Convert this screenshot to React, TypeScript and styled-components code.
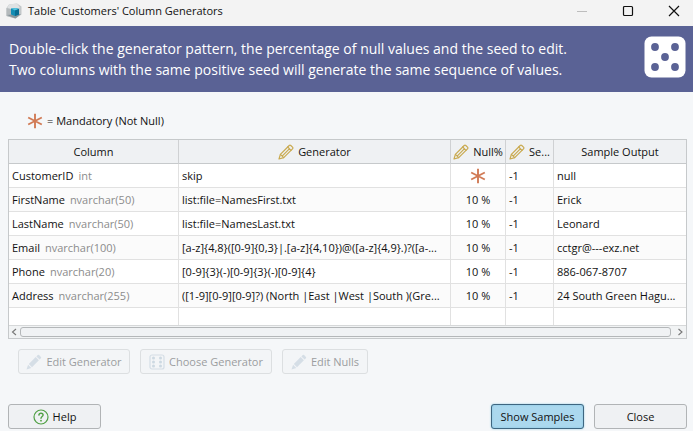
import React from "react";
import styled, { createGlobalStyle, css } from "styled-components";

const GlobalStyle = createGlobalStyle`
  body {
    margin: 0;
    background: #f5f7f9;
    color: #111;
    font: 12px/16px "Open Sans", "Noto Sans", sans-serif;
  }
  * { box-sizing: border-box; }
  svg { display: block; flex: none; }
`;

const TitleBar = styled.header`
  display: flex;
  align-items: center;
  height: 26px;
  padding: 0 6px 4px;
  gap: 6px;
  background: #f3f3f3;
`;

const Title = styled.h1`
  flex: 1;
  margin: 0;
  font-size: 11px;
  font-weight: 400;
  white-space: nowrap;
`;

const WindowControls = styled.div`
  display: flex;
  gap: 30px;
  padding-right: 5px;
`;

const WindowButton = styled.button`
  padding: 0;
  border: 0;
  background: none;
  color: #111;
  &:disabled { color: #bdbdbd; }
`;

const Banner = styled.section`
  display: flex;
  align-items: center;
  justify-content: space-between;
  height: 66px;
  padding: 0 7px 0 9px;
  background: #5a6295;
  color: #fff;
  font-size: 14px;
  line-height: 21px;
  white-space: nowrap;
`;

const BannerText = styled.p`
  margin: 0;
`;

const DiceFrame = styled.div`
  padding-bottom: 4px;
`;

const Content = styled.main`
  display: flex;
  flex-direction: column;
  padding: 20px 6px 2px 8px;
`;

const Legend = styled.div`
  display: flex;
  align-items: center;
  gap: 4px;
  height: 18px;
  margin: 0 0 9px 19px;
  font-size: 11px;
`;

const TableFrame = styled.div`
  border: 1px solid #c6c9cb;
  background: #fff;
`;

const Table = styled.table`
  width: 100%;
  table-layout: fixed;
  border-collapse: separate;
  border-spacing: 0;
  font-size: 11px;
`;

const Col = styled.col<{ $width?: number }>`
  width: ${(p) => (p.$width ? `${p.$width}px` : "auto")};
`;

const HeadCell = styled.th`
  height: 24px;
  padding: 0 1px;
  border-right: 1px solid #cfd1d3;
  border-bottom: 1px solid #c6c9cb;
  background: #eff1f3;
  font-weight: 400;
  white-space: nowrap;
  overflow: hidden;
  &:last-child { border-right: 0; }
`;

const HeadLabel = styled.span`
  display: flex;
  align-items: center;
  justify-content: center;
  gap: 4px;
`;

const Row = styled.tr`
  &:nth-child(even) { background: #fbfbfb; }
`;

const Cell = styled.td<{ $center?: boolean; $short?: boolean }>`
  height: ${(p) => (p.$short ? 17 : 24)}px;
  padding: 0 3px;
  border-right: 1px solid #e1e1e1;
  border-bottom: ${(p) => (p.$short ? "0" : "1px solid #e1e1e1")};
  text-align: ${(p) => (p.$center ? "center" : "left")};
  white-space: nowrap;
  overflow: hidden;
  &:last-child { border-right: 0; }
`;

const TypeName = styled.span`
  margin-left: 5px;
  color: #8c8c8c;
`;

const CenterIcon = styled.span`
  display: flex;
  justify-content: center;
`;

const ScrollBar = styled.div`
  display: flex;
  align-items: center;
  height: 13px;
  border-top: 1px solid #d6d8d9;
  background: #f1f3f4;
`;

const ScrollArrow = styled.button`
  display: flex;
  align-items: center;
  width: 11px;
  height: 10px;
  padding: 0 2px;
  border: 0;
  background: none;
  color: #777;
`;

const ScrollTrack = styled.div`
  flex: 1;
  padding-right: 4px;
`;

const ScrollThumb = styled.div`
  height: 10px;
  border: 1px solid #b4b7b9;
  border-radius: 3px;
  background: #f0f2f4;
`;

const ButtonRow = styled.div`
  display: flex;
  gap: 10px;
  padding: 10px 10px 0;
`;

const Footer = styled.footer`
  display: flex;
  justify-content: space-between;
  padding-top: 30px;
`;

const FooterGroup = styled.div`
  display: flex;
  gap: 10px;
`;

const primary = css`
  border-color: #3f6680;
  background: #abd8ee;
  box-shadow: 0 0 2px #8ccbe3, inset 0 0 2px #7fc0df;
`;

const Button = styled.button<{ $width: number; $primary?: boolean }>`
  display: flex;
  align-items: center;
  justify-content: center;
  gap: 4px;
  width: ${(p) => p.$width}px;
  height: 25px;
  padding: 0;
  border: 1px solid #b1b4b6;
  border-radius: 3px;
  background: #eff1f3;
  color: #111;
  font: inherit;
  font-size: 11px;
  white-space: nowrap;
  &:disabled {
    border-color: #dcdfe1;
    background: #f3f5f7;
    color: #9b9da0;
  }
  ${(p) => p.$primary && primary}
`;

const AppIcon = () => (
  <svg width="16" height="18" viewBox="0 0 16 18" aria-hidden="true">
    <path d="M3 2.500 11 1.500l4.500 3v8l-6 4L.5 14V6z" fill="#c3c8ca" />
    <path d="m3 2.500 8-1 3 4-5 2-8-1z" fill="#dfe2e3" />
    <path d="M.5 6 5 7v6l4 3.500L.5 14z" fill="#b4babc" />
    <path d="m1 13 5-.5 9-.5-5.500 4.500z" fill="#87949a" />
    <path d="m5 6.500 5-.5 3 1v5.500l-4 1.500-4-1.500z" fill="#138db4" />
    <path d="m5 6.500 5-.5 3 1-4 1.500z" fill="#56c5df" />
    <path d="m9 8.500 4-1.500v5.500L9 14z" fill="#086d93" />
  </svg>
);

const Asterisk = () => (
  <svg width="16" height="16" viewBox="0 0 16 16" aria-hidden="true">
    <path d="M8 .8v14.400M1.200 4.500l13.600 7M14.800 4.500l-13.600 7" stroke="#d17b56" strokeWidth="1.9" fill="none" />
  </svg>
);

const PencilOutline = () => (
  <svg width="16" height="16" viewBox="0 0 16 16" aria-hidden="true">
    <g fill="none" stroke="#c9aa50" strokeWidth="1.2" strokeLinejoin="round" strokeLinecap="round">
      <path d="m1 15 1.4-4.7 8.8-8.8q.8-.8 1.6 0l1.7 1.7q.8.8 0 1.6l-8.8 8.8z" />
      <path d="m2.4 10.3 3.3 3.3M9.7 3l3.3 3.3M4.4 11.8l6.9-6.9" />
    </g>
  </svg>
);

const PencilSolid = () => (
  <svg width="16" height="16" viewBox="0 0 16 16" aria-hidden="true">
    <g fill="#d5dee6">
      <path d="m.5 15.5 1.6-4.8 3.2 3.2z" />
      <path d="m2.8 10 6.9-6.9 3.2 3.2L6 13.2z" />
      <path d="m10.4 2.4 1.3-1.3q.7-.7 1.4 0l1.8 1.8q.7.7 0 1.4l-1.3 1.3z" />
    </g>
  </svg>
);

const DiceSix = () => (
  <svg width="16" height="16" viewBox="0 0 16 16" aria-hidden="true">
    <rect x="1" y="1" width="14" height="14" rx="2" fill="none" stroke="#d5dee6" strokeWidth="1.2" />
    {[4, 8, 12].map((y) =>
      [4.5, 11.5].map((x) => <circle key={`${x}-${y}`} cx={x} cy={y} r="1.5" fill="#cdd9e2" />)
    )}
  </svg>
);

const DiceFive = () => (
  <svg width="42" height="42" viewBox="0 0 42 42" aria-hidden="true">
    <rect x=".5" y=".5" width="41" height="41" rx="7" fill="#fff" />
    {[[11, 11], [31, 11], [21, 21], [11, 31], [31, 31]].map(([x, y]) => (
      <circle key={`${x}-${y}`} cx={x} cy={y} r="3.9" fill="#5a6295" />
    ))}
  </svg>
);

const HelpIcon = () => (
  <svg width="16" height="16" viewBox="0 0 16 16" aria-hidden="true">
    <g fill="none" stroke="#50a044" strokeLinecap="round">
      <circle cx="8" cy="8" r="7" strokeWidth="1.2" />
      <path d="M5.9 6.1C6 4.8 6.9 4.2 8 4.2c1.2 0 2.1.7 2.1 1.8C10.1 7.500 8 7.600 8 9.300" strokeWidth="1.4" />
    </g>
    <circle cx="8" cy="11.7" r=".9" fill="#50a044" />
  </svg>
);

const Chevron = ({ right }: { right?: boolean }) => (
  <svg width="6" height="8" viewBox="0 0 6 8" aria-hidden="true">
    <path d={right ? "m1.500 1 3.500 3-3.500 3" : "M5 1 1.500 4 5 7"} fill="none" stroke="currentColor" strokeWidth="1.1" />
  </svg>
);

const rows = [
  { name: "CustomerID", type: "int", generator: "skip", nulls: null, seed: "-1", sample: "null" },
  { name: "FirstName", type: "nvarchar(50)", generator: "list:file=NamesFirst.txt", nulls: "10 %", seed: "-1", sample: "Erick" },
  { name: "LastName", type: "nvarchar(50)", generator: "list:file=NamesLast.txt", nulls: "10 %", seed: "-1", sample: "Leonard" },
  { name: "Email", type: "nvarchar(100)", generator: "[a-z]{4,8}([0-9]{0,3}|.[a-z]{4,10})@([a-z]{4,9}.)?([a-...", nulls: "10 %", seed: "-1", sample: "cctgr@---exz.net" },
  { name: "Phone", type: "nvarchar(20)", generator: "[0-9]{3}(-)[0-9]{3}(-)[0-9]{4}", nulls: "10 %", seed: "-1", sample: "886-067-8707" },
  { name: "Address", type: "nvarchar(255)", generator: "([1-9][0-9][0-9]?) (North |East |West |South )(Gre...", nulls: "10 %", seed: "-1", sample: "24 South Green Hagu..." },
];

const columns = [
  { label: "Column", width: 170, editable: false },
  { label: "Generator", editable: true },
  { label: "Null%", width: 55, editable: true },
  { label: "Se...", width: 48, editable: true },
  { label: "Sample Output", width: 132, editable: false },
];

export default function App() {
  return (
    <>
      <GlobalStyle />
      <TitleBar>
        <AppIcon />
        <Title>Table 'Customers' Column Generators</Title>
        <WindowControls>
          <WindowButton disabled aria-label="Minimize">
            <svg width="16" height="12" viewBox="0 0 16 12"><path d="M3 6.500h10" stroke="currentColor" /></svg>
          </WindowButton>
          <WindowButton aria-label="Maximize">
            <svg width="16" height="12" viewBox="0 0 16 12"><rect x="3.500" y="1.500" width="9" height="9" rx="1" fill="none" stroke="currentColor" strokeWidth="1.2" /></svg>
          </WindowButton>
          <WindowButton aria-label="Close window">
            <svg width="16" height="12" viewBox="0 0 16 12"><path d="m3 1 10 10M13 1 3 11" stroke="currentColor" strokeWidth="1.2" /></svg>
          </WindowButton>
        </WindowControls>
      </TitleBar>
      <Banner>
        <BannerText>
          Double-click the generator pattern, the percentage of null values and the seed to edit.
          <br />
          Two columns with the same positive seed will generate the same sequence of values.
        </BannerText>
        <DiceFrame><DiceFive /></DiceFrame>
      </Banner>
      <Content>
        <Legend>
          <Asterisk />
          <span>= Mandatory (Not Null)</span>
        </Legend>
        <TableFrame>
          <Table>
            <colgroup>
              {columns.map((c) => <Col key={c.label} $width={c.width} />)}
            </colgroup>
            <thead>
              <tr>
                {columns.map((c) => (
                  <HeadCell key={c.label} scope="col">
                    <HeadLabel>{c.editable && <PencilOutline />}{c.label}</HeadLabel>
                  </HeadCell>
                ))}
              </tr>
            </thead>
            <tbody>
              {rows.map((r) => (
                <Row key={r.name}>
                  <Cell>{r.name}<TypeName>{r.type}</TypeName></Cell>
                  <Cell>{r.generator}</Cell>
                  <Cell $center>{r.nulls ?? <CenterIcon><Asterisk /></CenterIcon>}</Cell>
                  <Cell>{r.seed}</Cell>
                  <Cell>{r.sample}</Cell>
                </Row>
              ))}
              <tr>
                {columns.map((c) => <Cell key={c.label} $short />)}
              </tr>
            </tbody>
          </Table>
          <ScrollBar>
            <ScrollArrow aria-label="Scroll left"><Chevron /></ScrollArrow>
            <ScrollTrack><ScrollThumb /></ScrollTrack>
            <ScrollArrow aria-label="Scroll right"><Chevron right /></ScrollArrow>
          </ScrollBar>
        </TableFrame>
        <ButtonRow>
          <Button $width={112} disabled><PencilSolid />Edit Generator</Button>
          <Button $width={132} disabled><DiceSix />Choose Generator</Button>
          <Button $width={86} disabled><PencilSolid />Edit Nulls</Button>
        </ButtonRow>
        <Footer>
          <Button $width={93}><HelpIcon />Help</Button>
          <FooterGroup>
            <Button $width={93} $primary>Show Samples</Button>
            <Button $width={93}>Close</Button>
          </FooterGroup>
        </Footer>
      </Content>
    </>
  );
}
